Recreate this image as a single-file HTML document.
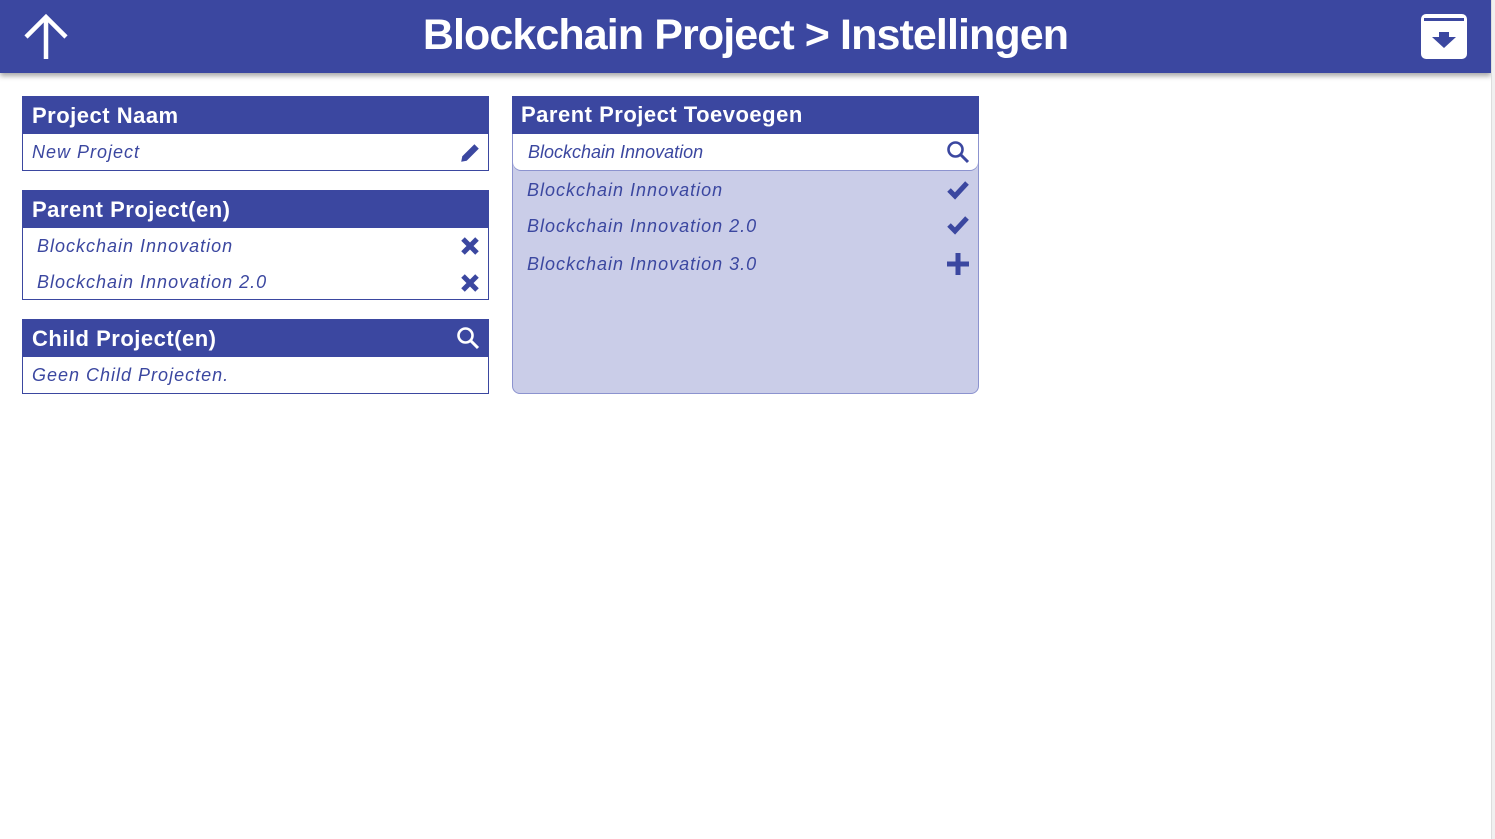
<!DOCTYPE html>
<html><head><meta charset="utf-8"><style>
body{margin:0;width:1495px;height:839px;background:#fff;font-family:"Liberation Sans",sans-serif;overflow:hidden;position:relative}
.top{position:absolute;left:0;top:0;width:1491px;height:73px;background:#3b47a0;box-shadow:0 3px 5px rgba(0,0,0,.35)}
.title{position:absolute;left:0;width:1491px;top:11px;text-align:center;color:#fff;font-size:43px;font-weight:bold;letter-spacing:-0.9px}
.sb{position:absolute;left:1491px;top:0;width:4px;height:839px;background:#f0f0f0;border-left:1px solid #ddd}
.card{position:absolute;border:1px solid #3b47a0;box-sizing:border-box}
.hd{background:#3b47a0;color:#fff;font-size:22px;font-weight:bold;height:37px;line-height:37px;padding-left:9px;letter-spacing:.5px;position:relative}
.row{position:relative;height:36px;line-height:36px;color:#3b47a0;font-style:italic;font-size:18px;letter-spacing:1px;padding-left:9px}
.ic{position:absolute;right:7px;top:8px}
</style></head><body>
<div class="top">
<svg style="position:absolute;left:22px;top:13px" width="48" height="48" viewBox="0 0 48 48"><path d="M24 46V5M4 24L24 4L44 24" stroke="#fff" stroke-width="4.5" fill="none"/></svg>
<div class="title">Blockchain Project &gt; Instellingen</div>
<svg style="position:absolute;left:1420px;top:13px" width="48" height="47" viewBox="0 0 48 47"><rect x="1" y="1" width="46" height="45" rx="5" fill="#fff"/><rect x="4" y="5" width="40" height="3" fill="#3b47a0"/><path d="M12 24h7v-5h10v5h7L24 35z" fill="#3b47a0"/></svg>
</div>
<div class="sb"></div>

<div class="card" style="left:22px;top:96px;width:467px;height:75px">
<div class="hd">Project Naam</div>
<div class="row">New Project<svg class="ic" style="top:8px" width="22" height="22" viewBox="0 0 20 20"><path d="M2 18l1-5L14 2l4 4L7 17z" fill="#3b47a0"/></svg></div>
</div>

<div class="card" style="left:22px;top:190px;width:467px;height:110px">
<div class="hd">Parent Project(en)</div>
<div class="row" style="padding-left:14px">Blockchain Innovation<svg class="ic" style="right:8px" width="20" height="20" viewBox="0 0 20 20"><path d="M3 3L17 17M17 3L3 17" stroke="#3b47a0" stroke-width="5"/></svg></div>
<div class="row" style="padding-left:14px">Blockchain Innovation 2.0<svg class="ic" style="right:8px;top:9px" width="20" height="20" viewBox="0 0 20 20"><path d="M3 3L17 17M17 3L3 17" stroke="#3b47a0" stroke-width="5"/></svg></div>
</div>

<div class="card" style="left:22px;top:319px;width:467px;height:75px">
<div class="hd">Child Project(en)<svg class="ic" style="top:6px;right:8px" width="24" height="24" viewBox="0 0 24 24"><circle cx="9.5" cy="9.5" r="7" stroke="#fff" stroke-width="2.6" fill="none"/><path d="M14.5 14.5L22 22" stroke="#fff" stroke-width="3"/></svg></div>
<div class="row">Geen Child Projecten.</div>
</div>

<div class="card" style="left:512px;top:96px;width:467px;height:298px;background:#cacde8;border-color:#8c93cf;border-radius:0 0 8px 8px">
<div class="hd" style="margin:-1px -1px 0;height:38px;line-height:38px">Parent Project Toevoegen</div>
<div class="row" style="background:#fff;border-radius:0 0 8px 8px;height:36px;padding-left:15px;letter-spacing:0;font-size:18px;box-shadow:0 1px 0 #8c93cf">Blockchain Innovation<svg class="ic" style="top:6px;right:8px" width="24" height="24" viewBox="0 0 24 24"><circle cx="9.5" cy="9.5" r="7" stroke="#3b47a0" stroke-width="2.6" fill="none"/><path d="M14.5 14.5L22 22" stroke="#3b47a0" stroke-width="3"/></svg></div>
<div class="row" style="padding-left:14px;margin-top:2px">Blockchain Innovation<svg class="ic" style="right:8px" width="24" height="20" viewBox="0 0 24 20"><path d="M3 10l6 6L21 3" stroke="#3b47a0" stroke-width="5" fill="none"/></svg></div>
<div class="row" style="padding-left:14px">Blockchain Innovation 2.0<svg class="ic" style="right:8px;top:7px" width="24" height="20" viewBox="0 0 24 20"><path d="M3 10l6 6L21 3" stroke="#3b47a0" stroke-width="5" fill="none"/></svg></div>
<div class="row" style="padding-left:14px;margin-top:2px">Blockchain Innovation 3.0<svg class="ic" style="right:8px;top:6px" width="24" height="24" viewBox="0 0 24 24"><path d="M12 1v22M1 12h22" stroke="#3b47a0" stroke-width="5"/></svg></div>
</div>
</body></html>
